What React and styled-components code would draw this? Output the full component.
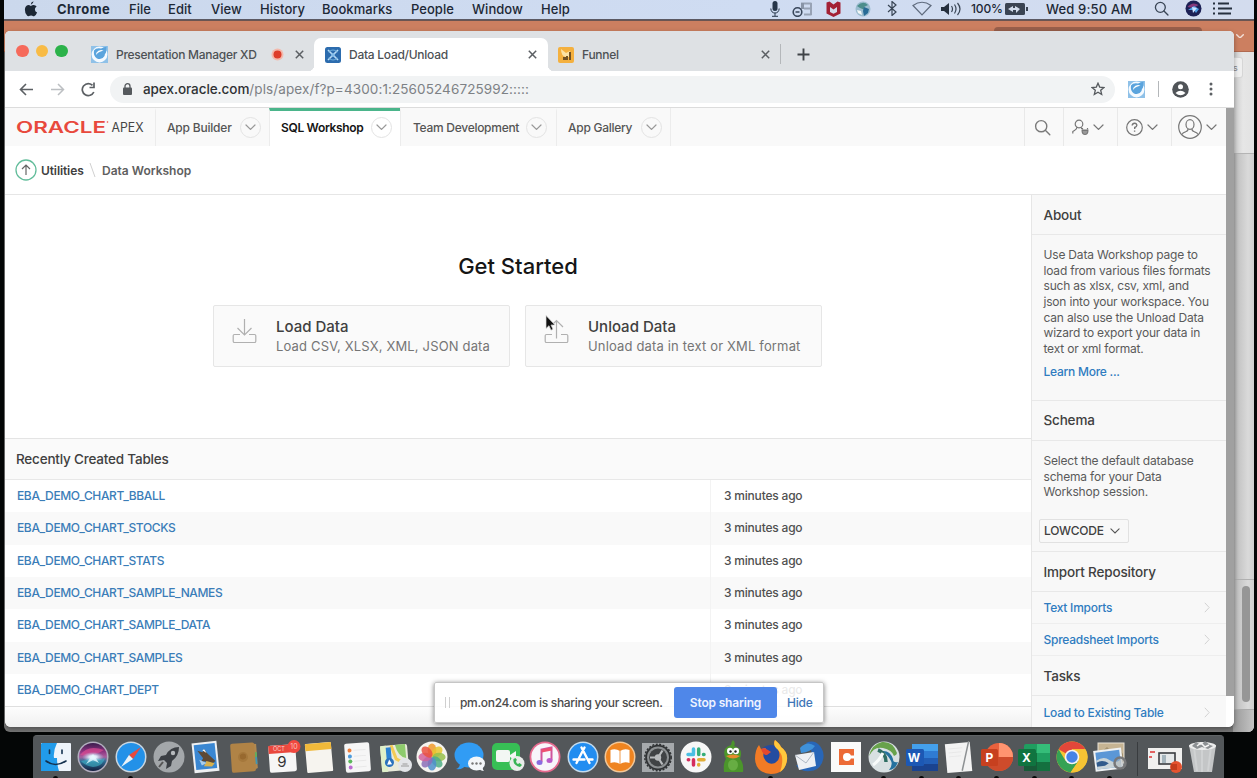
import React from "react";
import styled, { createGlobalStyle } from "styled-components";

const Global = createGlobalStyle`
  * { box-sizing: border-box; }
  body { margin: 0; background: #000; }
  #root { font-family: Inter, "Liberation Sans", sans-serif; }
  svg { display: block; flex: none; }
`;

/* ---------- desktop ---------- */
const Desktop = styled.div`
  position: relative; width: 1257px; height: 778px; overflow: hidden; background: #040606;
`;
const MenuBar = styled.header`
  display: flex; align-items: center; height: 20px; margin: 0 3px 0 4px; padding: 0 0 2px 20px;
  background: linear-gradient(90deg, #cbd8ec, #cfdcf2 60%, #d3dcee); color: #1d2836; font-size: 13px; font-weight: 500;
  border-bottom: 1px solid #5b5963;
`;
const MenuItem = styled.span`
  flex: none; width: ${p => p.$w}px; white-space: nowrap; font-weight: ${p => (p.$bold ? 700 : 500)};
  letter-spacing: ${p => p.$ls || 0}px; font-size: ${p => p.$size || 13}px; padding-left: ${p => p.$pl || 0}px;
`;
const MenuIcon = styled.span`
  flex: none; display: flex; justify-content: center; width: ${p => p.$w}px;
`;
const BackWindow = styled.div`
  position: absolute; left: 4px; top: 20px; width: 1250px; height: 712px; border-radius: 0 0 6px 6px;
  overflow: hidden; display: flex; flex-direction: column; background: #777;
`;
const BackTitle = styled.div`
  height: 32px; flex: none; background: #cc7f60; border-top: 1px solid #6b5552; border-bottom: 1px solid #b06a50; display: flex;
  justify-content: flex-end; padding-right: 10px; align-items: center;
`;
const BackTitleField = styled.div`
  align-self: flex-start; width: 208px; height: 14px; margin: 6px 34px 0 0; border-radius: 4px; background: #985f4b;
`;
const BackBody = styled.div`
  flex: 1; margin-left: 1229px; background: linear-gradient(90deg, #aaa 0, #c4c4c4 5px, #dadada 15px, #cfcfcf);
  display: flex; flex-direction: column; align-items: flex-end;
`;
const BackRibbon = styled.div`
  width: 21px; height: 102px; flex: none; border-bottom: 1px solid #b4b4b4; padding-top: 5px;
  background: linear-gradient(90deg, #c9c9c9, #e6e6e6 10px, #e2e2e2);
`;
const BackButton = styled.div`
  width: 10px; height: 21px; border: 1px solid #d6d6d6; border-left: 0; border-radius: 0 3px 3px 0; background: #efefef;
  font-size: 9px; line-height: 19px; color: #888;
`;
const BackPane = styled.div`
  width: 21px; height: 426px; flex: none; border-bottom: 1px solid #b0b0b0;
`;
const BackScroll = styled.div`
  width: 8px; height: 116px; margin: 6px 4px 0 0; border-radius: 4px; background: #969696; flex: none;
`;
const BackStatus = styled.div`
  width: 21px; flex: 1; margin-top: 7px; border-top: 1px solid #aaa; background: linear-gradient(90deg, #999, #c4c4c4);
`;

/* ---------- browser window ---------- */
const Browser = styled.div`
  position: absolute; left: 5px; top: 31px; width: 1229px; height: 696px; border-radius: 5px 5px 6px 6px; overflow: hidden;
  background: #fff; display: flex; flex-direction: column; box-shadow: 0 2px 5px rgba(0,0,0,.35);
`;
const TabStrip = styled.div`
  height: 40px; flex: none; background: #dee1e4; display: flex; align-items: flex-end; padding-left: 11px;
`;
const Lights = styled.div`
  display: flex; gap: 7px; width: 75px; height: 40px; align-items: center; flex: none;
`;
const Light = styled.i`
  width: 12.6px; height: 12.6px; border-radius: 50%; background: ${p => p.$c};
`;
const Tab = styled.div`
  position: relative; height: 33px; width: ${p => p.$w}px; flex: none; display: flex; align-items: center; padding-left: ${p => p.$pl || 0}px;
  border-radius: 7px 7px 0 0; background: ${p => (p.$on ? "#fff" : "transparent")}; color: #4d5155; font-size: 12px; font-weight: 500;
  &::before, &::after { content: ""; display: ${p => (p.$on ? "block" : "none")}; position: absolute; bottom: 0; width: 6px; height: 6px; }
  &::before { left: -6px; background: radial-gradient(circle at 0 0, transparent 6px, #fff 6.5px); }
  &::after { right: -6px; background: radial-gradient(circle at 100% 0, transparent 6px, #fff 6.5px); }
`;
const TabTitle = styled.span`
  margin-left: 8px; width: ${p => p.$w}px; white-space: nowrap; letter-spacing: -.27px;
`;
const Recording = styled.span`
  margin-right: 11px;
`;
const Divider = styled.i`
  width: 1px; height: ${p => p.$h}px; background: #b4b7ba; flex: none; margin: ${p => p.$m || 0};
`;
const Toolbar = styled.div`
  height: 36px; flex: none; display: flex; align-items: center; padding-left: 14px; background: #fff;
`;
const NavIcons = styled.div`
  display: flex; width: 91px; gap: 16px; align-items: center;
`;
const Address = styled.div`
  height: 27px; width: 1005px; border-radius: 14px; background: #f1f3f4; display: flex; align-items: center; padding: 0 10px 0 13px;
  font-size: 13.5px; color: #7d8185; white-space: nowrap;
`;
const Url = styled.span`
  flex: 1; margin-left: 11px; letter-spacing: .1px;
  b { color: #2f3235; font-weight: 500; letter-spacing: -.07px; }
`;
const Viewport = styled.div`
  flex: 1; display: flex; min-height: 0; border-top: 1px solid #dcdcdc;
`;
const Scroll = styled.div`
  width: 8px; background: #fff; &::before { content: ""; display: block; height: 588px; background: #a0a0a0; }
`;
const Page = styled.div`
  width: 1221px; display: flex; flex-direction: column; min-height: 0;
`;

/* ---------- APEX ---------- */
const NavBar = styled.nav`
  height: 38px; flex: none; background: #f9f9f9; display: flex;
`;
const Brand = styled.div`
  width: 150px; padding: 0 0 0 11px; display: flex; align-items: center;
`;
const NavTab = styled.div`
  width: ${p => p.$w}px; padding-left: ${p => p.$pl || 11}px; border-left: 1px solid #ececec; display: flex; align-items: center;
  border-top: 3px solid ${p => (p.$on ? "#4bb58b" : "transparent")}; padding-bottom: 3px;
  background: ${p => (p.$on ? "#fff" : "transparent")}; color: ${p => (p.$on ? "#151515" : "#555")}; font-size: 12px; font-weight: ${p => (p.$on ? 600 : 500)};
  span { width: ${p => p.$tw}px; white-space: nowrap; letter-spacing: ${p => p.$ls || 0}px; }
`;
const Drop = styled.i`
  width: 21px; height: 21px; border: 1px solid #e3e3e3; border-radius: 50%; display: flex; align-items: center; justify-content: center;
`;
const NavFill = styled.div`
  flex: 1; border-left: 1px solid #ececec;
`;
const NavTool = styled.div`
  width: ${p => p.$w}px; border-left: 1px solid #e9e9e9; display: flex; align-items: center; justify-content: center; gap: 4px; padding-right: ${p => p.$pr || 2}px;
`;
const Crumbs = styled.div`
  height: 49px; flex: none; border-bottom: 1px solid #e6e6e6; display: flex; align-items: center; padding-left: 10px; font-size: 12px; font-weight: 600; color: #555;
`;
const Crumb = styled.span`
  color: ${p => p.$c}; width: ${p => p.$w}px; margin-left: ${p => p.$ml}px; white-space: nowrap; letter-spacing: ${p => p.$ls || 0}px;
`;
const Body = styled.div`
  flex: 1; display: flex; min-height: 0; overflow: hidden;
`;
const Main = styled.main`
  width: 1026px; display: flex; flex-direction: column;
`;
const Hero = styled.section`
  height: 244px; flex: none; display: flex; flex-direction: column; align-items: center; padding-top: 56px; border-bottom: 1px solid #e4e4e4;
`;
const HeroTitle = styled.h1`
  margin: 0; font-size: 22px; line-height: 30px; font-weight: 500; color: #151515;
`;
const Cards = styled.div`
  display: flex; gap: 15px; margin: 24px 1px 0 0;
`;
const Card = styled.div`
  width: 297px; height: 62px; border: 1px solid #e6e6e6; border-radius: 2px; background: #fafafa; display: flex; align-items: center; padding: 0 0 0 18px;
`;
const CardIcon = styled.span`
  height: 36px;
`;
const CardText = styled.div`
  margin-left: 19px; display: flex; flex-direction: column; white-space: nowrap;
`;
const CardTitle = styled.span`
  font-size: 15px; line-height: 20px; font-weight: 500; color: #404040;
`;
const CardSub = styled.span`
  font-size: 13px; line-height: 18px; color: #757575; letter-spacing: .16px;
`;
const TableTitle = styled.h2`
  margin: 0; height: 41px; flex: none; padding-left: 11px; line-height: 40px; background: #fafafa; border-bottom: 1px solid #e8e8e8; font-size: 13.5px; font-weight: 500; color: #404040; letter-spacing: -.2px;
`;
const Row = styled.div`
  height: 32.35px; flex: none; display: flex; background: ${p => (p.$alt ? "#f9f9f9" : "#fff")}; line-height: 32px; font-size: 12px;
`;
const Name = styled.a`
  width: 706px; padding-left: 12px; color: #3b7db8; border-right: 1px solid #f3f3f3; font-weight: 500; letter-spacing: -.37px;
`;
const When = styled.span`
  padding-left: 13px; color: #505050; font-weight: 500; letter-spacing: -.2px;
`;
const TableFoot = styled.div`
  flex: 1; border-top: 1px solid #dfdfdf; background: linear-gradient(#fdfdfd, #f0f0f0);
`;
const Side = styled.aside`
  width: 195px; border-left: 1px solid #e6e6e6; background: #f8f8f8; display: flex; flex-direction: column; color: #5a5a5a;
`;
const SideTitle = styled.h3`
  margin: 0; flex: none; height: 40px; line-height: ${p => p.$lh || 39}px; padding-left: 11.5px; font-size: 13.5px; font-weight: 500; color: #404040;
  border-bottom: 1px solid #e8e8e8; letter-spacing: -.17px;
`;
const SideBody = styled.div`
  flex: none; height: ${p => p.$h}px; padding: 12px 0 0 11.5px; border-bottom: 1px solid #e8e8e8; display: flex; flex-direction: column; align-items: flex-start;
`;
const Line = styled.span`
  font-size: 12px; line-height: 15.7px; height: 15.7px; white-space: nowrap; letter-spacing: -.19px;
`;
const More = styled.a`
  margin-top: 7px; font-size: 12px; line-height: 16px; font-weight: 500; color: #2f7cc0; letter-spacing: -.25px;
`;
const Select = styled.div`
  margin: 19px 0 0 -4.5px; width: 90px; height: 24px; border: 1px solid #e1e1e1; border-radius: 2px; padding: 0 0 1px 4px; display: flex; align-items: center; gap: 6px;
  font-size: 12px; font-weight: 500; color: #404040; letter-spacing: -.25px;
`;
const SideLink = styled.a`
  flex: none; height: ${p => p.$h || 32}px; padding: 0 16px 0 11.5px; display: flex; align-items: center; justify-content: space-between; font-size: 12px; font-weight: 500; color: #2f7cc0;
  border-bottom: 1px solid #eee; letter-spacing: -.25px; white-space: nowrap;
`;

/* ---------- overlays ---------- */
const Pointer = styled.div`
  position: absolute; left: 545px; top: 315px;
`;
const ShareBar = styled.div`
  position: absolute; left: 434px; top: 682px; width: 390px; height: 41px; background: rgba(255,255,255,.88); border: 1px solid #c6c6c6; border-radius: 2px;
  box-shadow: 0 1px 5px rgba(0,0,0,.5); display: flex; align-items: center; padding-left: 10px; font-size: 12px; font-weight: 500; color: #4b4b4b;
`;
const Grip = styled.i`
  width: 5px; height: 11px; border: solid #cfcfcf; border-width: 0 1px;
`;
const ShareText = styled.span`
  margin-left: 10px; width: 214px; white-space: nowrap; letter-spacing: -.3px;
`;
const Stop = styled.button`
  width: 103px; height: 31px; padding: 0; border: 0; border-radius: 3px; background: rgba(72,130,232,.96); color: #eef3ff; font: 600 12px Inter, sans-serif; letter-spacing: -.17px;
`;
const Hide = styled.a`
  margin-left: 10px; color: #3f76b8; letter-spacing: -.2px;
`;
const Dock = styled.footer`
  position: absolute; left: 33px; top: 735px; width: 1191px; height: 43px; border-radius: 4px 4px 0 0; background: #53575a; display: flex; padding-left: 4px;
  border-top: 1px solid #5f6365;
`;
const DockItem = styled.div`
  position: relative; flex: none; width: 37.65px; padding-top: 5px; display: flex; justify-content: center; align-items: flex-start;
  &::after { content: ""; display: ${p => (p.$run ? "block" : "none")}; position: absolute; bottom: -1px; left: 16px; width: 5px; height: 3px; border-radius: 3px 3px 0 0; background: #050505; }
`;
const DockRule = styled.i`
  width: 1px; height: 34px; margin: 6px 8px 0 8px; background: #393c3f;
`;

const Chev = ({ c = "#777", w = 11, s = 1.2 }) => (
  <svg width={w} height={w * 0.6} viewBox="0 0 11 6.6" fill="none" stroke={c} strokeWidth={s} strokeLinecap="round"><path d="M1 1l4.5 4.4L10 1" /></svg>
);
const RightChev = () => (
  <svg width="6" height="11" viewBox="0 0 6 11" fill="none" stroke="#d2d2d2"><path d="M.8.8l4.4 4.7L.8 10.2" /></svg>
);
const Close = () => (
  <svg width="9" height="9" viewBox="0 0 9 9" stroke="#5b5f63" strokeWidth="1.500"><path d="M.8.8l7.4 7.4M8.2.8L.8 8.2" /></svg>
);
const PmIcon = () => (
  <svg width="17" height="17" viewBox="0 0 17 17"><rect width="17" height="17" fill="#8fc1e8" /><circle cx="8.500" cy="8.500" r="7.900" fill="#f5faff" /><path d="M3 4.500Q5 1.500 10 2.500L15.500 .5 15 6.500Q13.500 8 13.500 10 11 14.500 6 12.500 2 10 3 4.500z" fill="#5ba4dd" /><path d="M5.200 7Q8 2.800 12.500 4.500L9 5.800Q6 6.500 5.500 9z" fill="#fff" /></svg>
);
const Search = ({ size = 17, c = "#7a7a7a", s = 1.4 }) => (
  <svg width={size} height={size} viewBox="0 0 17 17" fill="none" stroke={c} strokeWidth={s} strokeLinecap="round"><circle cx="7.200" cy="7.200" r="5.600" /><path d="M11.300 11.300l4.500 4.500" /></svg>
);

/* ---------- dock drawings ---------- */
const art = {
  finder: <><rect x="1" y="2" width="30" height="28" rx="1" fill="#eef4fb" /><path d="M2 2h15q-4 8-3 15h3q0 7 2 13H1V3z" fill="#219bea" /><path d="M9.500 9v3.500M22 9v3.500M6 20q9 7 20 0" fill="none" stroke="#143250" strokeWidth="1.600" strokeLinecap="round" /></>,
  siri: <>
    <defs><radialGradient id="siriGlow"><stop offset="0" stopColor="#fff" /><stop offset=".35" stopColor="#e6f6ff" stopOpacity=".9" /><stop offset="1" stopColor="#9fd4f0" stopOpacity="0" /></radialGradient>
      <linearGradient id="siriBall" x1="0" y1="0" x2="0" y2="1"><stop offset="0" stopColor="#3a1c4c" /><stop offset=".3" stopColor="#8d3380" /><stop offset=".5" stopColor="#a9609f" /><stop offset=".65" stopColor="#2f6f96" /><stop offset="1" stopColor="#141d3d" /></linearGradient></defs>
    <circle cx="16" cy="16" r="15.500" fill="#b3aebf" /><circle cx="16" cy="16" r="14" fill="url(#siriBall)" /><path d="M3 14Q11 3 27 9q-6 4-12 5-6 1-12 0z" fill="#dd4b93" opacity=".7" /><path d="M4 20q8-1 11-6 5 6 13 3-2 8-12 9-8-1-12-6z" fill="#3fb3c8" opacity=".6" /><ellipse cx="16" cy="16" rx="11" ry="5" fill="url(#siriGlow)" /><path d="M16 13l6 9-6-3-7 4z" fill="#e3f8ff" opacity=".8" />
  </>,
  safari: <><circle cx="16" cy="16" r="15.500" fill="#c9d7e2" /><circle cx="16" cy="16" r="14" fill="#2391e8" /><path d="M26 6L14 14l4 4z" fill="#e9493d" /><path d="M6 26l8-12 4 4z" fill="#eaf2f8" /></>,
  launch: <><circle cx="16" cy="16" r="15.500" fill="#a3a7aa" /><path d="M26 6q-9 0-13 8l-5 1-3 5 6-1 3 3-1 6 5-3 1-5q7-5 7-14z" fill="#3b3f44" /><circle cx="20" cy="12" r="2.200" fill="#b6babd" /><path d="M10 21l-4 5" stroke="#555" strokeWidth="2" /></>,
  mail: <g transform="rotate(-6 16 16)"><rect x="3" y="1" width="25" height="30" fill="#eef0f2" /><rect x="5" y="3" width="21" height="25" fill="#3a87d2" /><path d="M8 9l5 2 2-3 3 5 7 8-3 2-8-3-4 1 3-4z" fill="#5d4936" /><path d="M13 9l2-1 2 4z" fill="#fff" /><path d="M16 20l8 3-3 3-8-1z" fill="#d7b14e" /><path d="M9 18l7 4-5 2z" fill="#a9cdea" /></g>,
  contacts: <g transform="rotate(-4 16 16)"><path d="M24 3l5 1v24l-5 2z" fill="#b08850" /><path d="M27 12h2v5h-2z" fill="#5fae5e" /><path d="M27 17h2v7h-2z" fill="#3f96b5" /><rect x="3" y="2" width="24" height="29" rx="2" fill="#b08346" /><circle cx="15" cy="16" r="5" fill="#a5783c" /><path d="M12 14q3-3 6 0v3q-3 3-6 0z" fill="#98692f" /></g>,
  calendar: <><g transform="rotate(-4 16 16)"><rect x="3" y="4" width="27" height="27" rx="2" fill="#f6f6f6" /><path d="M3 4h27v8H3z" fill="#e9483e" /></g><text x="16" y="26" textAnchor="middle" fontSize="15" fill="#333" fontFamily="Inter">9</text><text x="13" y="10" textAnchor="middle" fontSize="5.500" fill="#fbd0cc" fontFamily="Inter">OCT</text><circle cx="28" cy="5.500" r="6.500" fill="#f1483f" /><text x="28" y="8" textAnchor="middle" fontSize="7" fill="#fbc0bb" fontFamily="Inter">10</text></>,
  notes: <g transform="rotate(-5 16 16)"><rect x="3" y="2" width="26" height="29" rx="1" fill="#f6f4ef" /><path d="M3 2h26v7H3z" fill="#f0b93a" /></g>,
  reminders: <g transform="rotate(-4 16 16)"><rect x="4" y="2" width="25" height="29" rx="2" fill="#f6f6f6" /><circle cx="9" cy="9" r="2" fill="#ee7e3b" /><circle cx="9" cy="15" r="2" fill="#4d9bdc" /><circle cx="9" cy="20" r="2" fill="#5bb85c" /><circle cx="9" cy="26" r="2" fill="#bb6bd1" /><path d="M13 9h12M13 15h12M13 20h12M13 26h12" stroke="#e8e8e8" /></g>,
  maps: <><g transform="rotate(-5 16 16)"><rect x="2" y="4" width="27" height="26" rx="2" fill="#e9eadb" /><path d="M2 4h6v26H2z" fill="#dff0c9" /><path d="M17 4h10v14q-8-2-10-14z" fill="#8ecb6c" /><path d="M13 4l4 14 12 8" stroke="#f4cb55" strokeWidth="3" fill="none" /><path d="M10 6v14" stroke="#2b82d4" strokeWidth="5" /><circle cx="10" cy="21" r="4.500" fill="#2b72bd" /><path d="M10 18l2.500 5h-5z" fill="#fff" /></g><circle cx="26" cy="24" r="7" fill="#e3e5e8" /><path d="M22 25h8M23.500 23h5" stroke="#999" /></>,
  photos: <><circle cx="16" cy="16" r="15.500" fill="#f5f3ef" />{["#f19a2b", "#e8c62f", "#97c04b", "#4fae86", "#4e8fcb", "#8b6fb9", "#d2629a", "#ea5140"].map((c, i) => <ellipse key={c} cx="16" cy="9" rx="4.300" ry="6.600" fill={c} opacity=".85" transform={`rotate(${i * 45} 16 16)`} />)}</>,
  messages: <><ellipse cx="15" cy="14" rx="14.500" ry="12.500" fill="#319cf4" /><path d="M6 22q0 5-4 6 7 1 10-4z" fill="#319cf4" /><ellipse cx="22.500" cy="22.500" rx="8.500" ry="7" fill="#f3f6f9" /><path d="M25 27q1 3 5 3-2-2-1-6z" fill="#f3f6f9" /><circle cx="18.500" cy="22.500" r="1.200" fill="#777" /><circle cx="22.500" cy="22.500" r="1.200" fill="#777" /><circle cx="26.500" cy="22.500" r="1.200" fill="#777" /></>,
  facetime: <><rect x="0" y="2" width="28" height="27" rx="5" fill="#37bf55" /><rect x="4" y="9" width="14" height="12" rx="2" fill="#f2f7f3" /><path d="M18 14l6-4v10l-6-4z" fill="#f2f7f3" /><circle cx="25" cy="22.500" r="7.500" fill="#e9edea" /><path d="M21.500 18q-1 6 6.500 8l2-2-2.500-2-1.500 1q-2-1-2-3l1-1-1.500-2z" fill="#38b455" /></>,
  itunes: <><circle cx="16" cy="16" r="15.500" fill="#e66a8f" /><circle cx="16" cy="16" r="13.700" fill="#f8f5fa" /><path d="M12.500 21V8.500l10-2V19" stroke="#d0539b" strokeWidth="2" fill="none" /><path d="M12.500 10l10-2" stroke="#ee4f70" strokeWidth="3" /><ellipse cx="10.500" cy="21.500" rx="3" ry="2.500" fill="#8b6be0" /><ellipse cx="20.500" cy="19.500" rx="3" ry="2.500" fill="#bb5bc9" /></>,
  store: <><circle cx="16" cy="16" r="15.500" fill="#c5dcee" /><circle cx="16" cy="16" r="14" fill="#228df0" /><path d="M17.500 6.500L9.500 22M14.500 6.500L22.500 22M6.500 18.500h11M21 18.500h4.500" stroke="#fff" strokeWidth="2.400" strokeLinecap="round" /></>,
  books: <><circle cx="16" cy="16" r="15.500" fill="#f2c798" /><circle cx="16" cy="16" r="14" fill="#ef8420" /><path d="M6.500 9q5-2 9.500 1 4.500-3 9.500-1v13q-5-2-9.500 1-4.500-3-9.500-1z" fill="#fff" /><path d="M16 10v13" stroke="#ef9a4a" /></>,
  prefs: <><rect x="0" y="2" width="32" height="29" fill="#a5a9ac" /><circle cx="16" cy="16.500" r="12.800" fill="#303335" /><circle cx="16" cy="16.500" r="11" fill="#8c9092" /><circle cx="16" cy="16.500" r="9" fill="#404345" /><path d="M16 16.500H8M16 16.500l4.500-7M16 16.500l4.500 7" stroke="#b8bbbd" strokeWidth="2.200" /><circle cx="16" cy="16.500" r="3.200" fill="#b8bbbd" /><circle cx="16" cy="16.500" r="13.200" fill="none" stroke="#303335" strokeWidth="1.500" strokeDasharray="2 1.500" /></>,
  slack: <><circle cx="16" cy="16" r="15.500" fill="#f7f7f7" /><g strokeWidth="3.500" strokeLinecap="round"><path d="M13.500 8v4.500M8 13.500h5.500" stroke="#4abfe4" /><path d="M18.700 8v5.500M24 13.500h-.5" stroke="#35ae78" /><path d="M18.700 18.700H24M18.700 23.500v.5" stroke="#e2ae36" /><path d="M13.500 18.700V24M8.300 18.700h.4" stroke="#d52d5d" /></g></>,
  adium: <><path d="M16-1q3 3 1 6 8 2 7 9l-1 4q4 4 3 13H7Q6 22 9 18q-3-5-1-10 2-3 6-4 0-3 2-5z" fill="#4b952b" /><ellipse cx="13" cy="10" rx="3" ry="3.200" fill="#fff" /><ellipse cx="19" cy="10" rx="3" ry="3.200" fill="#fff" /><circle cx="13.500" cy="10.500" r="1.200" fill="#222" /><circle cx="18.500" cy="10.500" r="1.200" fill="#222" /><path d="M9 15q7-3 14 0-7 5-14 0z" fill="#e58b2c" /><ellipse cx="16" cy="24" rx="5" ry="5.500" fill="#67ad43" /></>,
  firefox: <><circle cx="16" cy="17" r="13" fill="#244ca0" /><path d="M20-1q5 4 6 7 7 5 6 13-2 14-16 14Q1 32 0 18 0 9 4 4l2 4 5-1q-4 5-2 10 4 8 11 5 6-4 4-11-1-4-4-6-2-3 0-6z" fill="#f27b25" /><path d="M20-1q5 4 6 7 7 5 6 13-1 8-7 12 3-8 2-15-1-5-6-9-3-3-1-8z" fill="#ffc83d" /><path d="M6 8q3-2 7 1l3 2-4 3q-4 0-6-6z" fill="#e6492d" /></>,
  thunder: <><path d="M13 2q8-4 14 3 6 8 2 17-4 8-12 8-10 1-14-6 18 3 16-11-1-7-6-11z" fill="#2866b7" /><path d="M7 7Q14-1 22 5q-4 6-14 7z" fill="#3f91d9" /><path d="M2 14l19-3 2 14-17 4z" fill="#eef1f4" /><path d="M2 14l11 8 8-11" stroke="#afb9c4" fill="none" /></>,
  camtasia: <><rect x="1" y="1" width="30" height="30" fill="#fafafa" /><rect x="9" y="8" width="15" height="16" fill="#ec6a36" /><circle cx="17" cy="16" r="4" fill="#fff" /><path d="M17 14.500h7v3h-7z" fill="#fff" /></>,
  webex: <><circle cx="16" cy="16" r="15.500" fill="#d8e0e2" /><path d="M1 15Q6 5 15 7q9 2 11 8 3-1 3-3Q25 0 14 1 4 3 1 15z" fill="#68a24b" /><path d="M14 10q8-1 11 8 0 4 5 3-3 8-9 8 4-5 2-9-3-6-9-10z" fill="#25719e" /><path d="M10 9q8 3 8 12" stroke="#2e6d62" strokeWidth="3.500" fill="none" /><path d="M5 24q6-4 10-12" stroke="#f7fafa" strokeWidth="3" fill="none" /></>,
  word: <><rect x="6" y="3" width="26" height="27" rx="2" fill="#2f7bd3" /><path d="M6 3h26v7H6z" fill="#44a0ec" /><path d="M6 17h26v6H6z" fill="#225eb6" /><path d="M6 23h26v7H6z" fill="#1a438f" /><rect x="0" y="8" width="18" height="17" rx="1.500" fill="#1c58b4" /><text x="8" y="21" textAnchor="middle" fontFamily="Inter" fontWeight="700" fontSize="12" fill="#fff">W</text></>,
  text: <g transform="rotate(-5 16 16)"><rect x="3" y="2" width="25" height="29" fill="#f3f3f3" /><path d="M27 1l-9 29" stroke="#8d9193" strokeWidth="1.500" /><path d="M6 7h14M6 11h13M6 15h12" stroke="#e8e8e8" /></g>,
  ppt: <><circle cx="18" cy="16" r="14" fill="#e9613d" /><path d="M18 2a14 14 0 0114 14H18z" fill="#ff9470" /><path d="M4 16h28a14 14 0 01-28 0z" fill="#ce4b2b" /><rect x="0" y="8" width="17" height="17" rx="1.500" fill="#c7401f" /><text x="8.500" y="21" textAnchor="middle" fontFamily="Inter" fontWeight="700" fontSize="12" fill="#fff">P</text></>,
  excel: <><rect x="6" y="3" width="26" height="27" rx="2" fill="#1f9e60" /><path d="M19 3h13v9H19z" fill="#35bd79" /><path d="M6 12h13v9H6zM19 21h13v9H19z" fill="#14703f" /><path d="M6 21h13v9H6z" fill="#185b38" /><rect x="0" y="8" width="18" height="17" rx="1.500" fill="#107440" /><text x="8.500" y="21" textAnchor="middle" fontFamily="Inter" fontWeight="700" fontSize="12" fill="#fff">X</text></>,
  chrome: <><circle cx="16" cy="16" r="15.500" fill="#f6c434" /><path d="M16 16L2.600 8.200A15.500 15.500 0 0129.400 8.200H16z" fill="#e2473a" /><path d="M16 16l-6.500 3.800L2.600 8.200a15.500 15.500 0 0012 23.200L22.500 20z" fill="#35a254" /><path d="M29.400 8.200H16l6.500 11.800-7.900 11.400A15.500 15.500 0 0029.400 8.200z" fill="#f6c434" /><circle cx="16" cy="16" r="7.300" fill="#f4f4f4" /><circle cx="16" cy="16" r="5.700" fill="#4683e6" /></>,
  preview: <><rect x="4" y="2" width="26" height="20" fill="#c6b493" stroke="#e8e2d6" /><path d="M5 13l8-7 7 7 6-4 3 4v8H5z" fill="#a2916f" /><g transform="rotate(-7 16 16)"><rect x="0" y="8" width="28" height="21" fill="#eef1f3" /><path d="M2 10h24v17H2z" fill="#5b97d6" /><path d="M2 18q8-4 13 1t11 1v7H2z" fill="#c9d4d8" /><path d="M2 20q6-3 12 2l-4 2H2z" fill="#315b8c" /></g><circle cx="26" cy="22" r="5.500" fill="#aeb4b680" stroke="#77787a" strokeWidth="2.500" /></>,
  shot: <><rect x="0" y="7" width="34" height="21" fill="#f0f0ef" /><rect x="11" y="12" width="16" height="11" fill="#e5e8e9" stroke="#3a3c40" strokeWidth="1.600" /><path d="M14 14h4v8h-4z" fill="#a5b5bd" /><path d="M2 11h5M1 16h3" stroke="#d33" strokeWidth="1.500" /><circle cx="28" cy="26" r="6" fill="#e5532f" /><path d="M23 23h6v6h-6z" fill="#c43d1d" /></>,
  trash: <><path d="M3 4h27l-4 27H8z" fill="#c4c6c7" /><path d="M8 6l3 24M16 6v25M25 6l-3 24" stroke="#d0d2d3" strokeWidth="2" /><ellipse cx="16.500" cy="5" rx="13.500" ry="4" fill="#eceded" /><path d="M6 5l4-4 5 3 4-4 5 4 3 1-5 3-6-2-5 2z" fill="#8c9093" /><path d="M11 5l4-3 4 4 4-2" stroke="#f4f4f4" strokeWidth="1.500" fill="none" /></>
};
const dockItems = ["finder*", "siri", "safari*", "launch", "mail", "contacts", "calendar", "notes", "reminders", "maps", "photos", "messages", "facetime", "itunes", "store", "books", "prefs", "slack", "adium", "firefox*", "thunder", "camtasia", "webex*", "word*", "text*", "ppt*", "excel*", "chrome*", "preview*"];
const DockIcon = ({ id }) => (
  <DockItem $run={id.endsWith("*")}><svg width="32" height="32" viewBox="0 0 32 32" overflow="visible">{art[id.replace("*", "")]}</svg></DockItem>
);

const tables = ["BBALL", "STOCKS", "STATS", "SAMPLE_NAMES", "SAMPLE_DATA", "SAMPLES", "DEPT"];
const menus = [["File", 39], ["Edit", 43], ["View", 49], ["History", 62], ["Bookmarks", 89], ["People", 61], ["Window", 69], ["Help", 222]];

function SystemMenu() {
  return (
    <MenuBar>
      <MenuItem $w={33}>
        <svg width="14" height="16" viewBox="0 0 14 16" fill="#1d2836"><path d="M9.500.3Q9.500 3 6.800 3.700 6.700 1.200 9.500.3zM6.900 4.900Q8 4 9.600 4q2 .1 3 1.600-2 1.200-1.700 3.200.2 2 2.200 2.800-1.400 3.600-3 3.700-1 0-1.800-.5-1.200-.5-2.400 0-1.600.9-2.700 0Q.7 12 .9 8.500 1.100 4.700 4.300 4.100q1.300 0 2.600.8z" /></svg>
      </MenuItem>
      <MenuItem $w={72} $bold $ls={0.5}>Chrome</MenuItem>
      {menus.map(([t, w]) => <MenuItem key={t} $w={w} $ls={0.04}>{t}</MenuItem>)}
      <MenuIcon $w={24}><svg width="10" height="16" viewBox="0 0 10 16"><rect x="2.500" y="0" width="5" height="10" rx="2.500" fill="#26364a" /><path d="M.8 7.500q.4 4.500 4.200 4.500t4.200-4.500M5 12v3M2 15.300h6" stroke="#26364a" fill="none" /></svg></MenuIcon>
      <MenuIcon $w={31}><svg width="21" height="16" viewBox="0 0 21 16" fill="none"><path d="M9 2.500h10.500M12 7.500h7.500M12 13.500h7.500M19 2v12" stroke="#98a3b5" strokeWidth="2" /><path d="M9 2h3v6H9z" fill="#8995a7" /><circle cx="5.500" cy="11" r="4.300" stroke="#39475b" strokeWidth="1.600" /><path d="M3.500 11h4" stroke="#39475b" strokeWidth="1.500" /></svg></MenuIcon>
      <MenuIcon $w={31}><svg width="15" height="16" viewBox="0 0 15 16"><path d="M.5 1.500l3-1 4 3 4-3 3 1v11l-7 3.500-7-3.500z" fill="#a32135" /><path d="M4 6v5l3.500 1.800L11 11V6L7.500 8.500z" fill="#d3daea" /></svg></MenuIcon>
      <MenuIcon $w={28}><svg width="16" height="16" viewBox="0 0 16 16"><circle cx="8" cy="8" r="7.500" fill="#9bbccf" /><path d="M2 5q6-6 11-1l-4 2 1 3-5-2z" fill="#4c8e8c" /><path d="M9 6l5 2-1 4-4 3-1-5z" fill="#286b96" /><path d="M2 9l4 1 1 4-4-2z" fill="#f2f6f5" /></svg></MenuIcon>
      <MenuIcon $w={30}><svg width="10" height="15" viewBox="0 0 10 15" fill="none" stroke="#394555" strokeWidth="1.200"><path d="M1 4l8 7-4 3.500V.5L9 4l-8 7" /></svg></MenuIcon>
      <MenuIcon $w={29}><svg width="20" height="15" viewBox="0 0 20 15" fill="none" stroke="#5f6b7d" strokeWidth="1.200"><path d="M1 4.500Q10-2 19 4.500L10 14z" /></svg></MenuIcon>
      <MenuIcon $w={31}><svg width="21" height="14" viewBox="0 0 21 14" fill="none" stroke="#394555" strokeWidth="1.200"><path d="M0 5h3l5-4v12L3 9H0z" fill="#26303e" stroke="none" /><path d="M10.500 4q2 3 0 6M13.500 2.500q3 4.500 0 9M16.500 1q5 6 0 12" /></svg></MenuIcon>
      <MenuItem $w={38} $size={12} $pl={4} $ls={-0.15}>100%</MenuItem>
      <MenuItem $w={41}><svg width="23" height="12" viewBox="0 0 23 12"><rect width="20" height="12" rx="1.500" fill="#3a4453" /><path d="M21 4h2v4h-2z" fill="#3a4453" /><path d="M3 6l5-3v2h2V3l5 3-4 4V7H8v2z" fill="#d2dcec" /></svg></MenuItem>
      <MenuItem $w={105} $ls={0.15}>Wed 9:50 AM</MenuItem>
      <MenuIcon $w={20}><Search size={15} c="#394555" s={1.500} /></MenuIcon>
      <MenuIcon $w={45}><svg width="17" height="17" viewBox="0 0 17 17"><circle cx="8.500" cy="8.500" r="8" fill="#1d2155" /><path d="M2.500 7q5-6 11-2l-5 3z" fill="#b2458a" opacity=".7" /><path d="M3 10l6-4 5 3-3 4-2-3z" fill="#4d9de3" /><path d="M7 7l5 1-4 5z" fill="#cce2ff" /></svg></MenuIcon>
      <MenuIcon $w={13}><svg width="19" height="13" viewBox="0 0 19 13" stroke="#26303e" strokeWidth="2"><path d="M0 1.500h2M0 6.500h2M0 11.500h2M5 1.500h11M5 6.500h14M5 11.500h13" /></svg></MenuIcon>
    </MenuBar>
  );
}

function BrowserChrome() {
  return (
    <>
      <TabStrip>
        <Lights><Light $c="#f66a5b" /><Light $c="#f8bb45" /><Light $c="#2bb24a" /></Lights>
        <Tab $w={223}>
          <PmIcon /><TabTitle $w={155}>Presentation Manager XD</TabTitle>
          <Recording><svg width="13" height="13" viewBox="0 0 13 13"><circle cx="6.500" cy="6.500" r="6" fill="#f3b9ac" /><circle cx="6.500" cy="6.500" r="4" fill="#dd3d2a" /></svg></Recording>
          <Close />
        </Tab>
        <Tab $w={234} $pl={11} $on>
          <svg width="16" height="16" viewBox="0 0 16 16"><rect width="16" height="16" rx="2.500" fill="#2c6cae" /><path d="M3 3l4 4M13 3L9 7M3 13l4-4M13 13L9 9" stroke="#b8dbf5" strokeWidth="1.600" /><circle cx="8" cy="8" r="2" fill="#85bde9" /><path d="M3 5q5-4 10 0M3 11q5 4 10 0" stroke="#6faedd" fill="none" /></svg>
          <TabTitle $w={179}>Data Load/Unload</TabTitle><Close />
        </Tab>
        <Tab $w={232} $pl={10}>
          <svg width="16" height="16" viewBox="0 0 16 16"><rect width="16" height="16" rx="2" fill="#f4b03e" /><path d="M3 2l5 4 4-2 1 6H8q-5-1-5-8z" fill="#fbe2a4" /><path d="M5 10h3v3H5zM8 9h2v4H8zM11 5h2v8h-2z" fill="#725223" /></svg>
          <TabTitle $w={179}>Funnel</TabTitle><Close />
        </Tab>
        <Divider $h={20} $m="0 16px 7px 0" />
        <svg width="13" height="33" viewBox="0 0 13 33" stroke="#3f4347" strokeWidth="1.900"><path d="M6.500 10.500v12M.5 16.500h12" /></svg>
      </TabStrip>
      <Toolbar>
        <NavIcons>
          <svg width="15" height="13" viewBox="0 0 15 13" fill="none" stroke="#5c6064" strokeWidth="1.600"><path d="M14 6.500H2M7 1L1.500 6.500 7 12" /></svg>
          <svg width="15" height="13" viewBox="0 0 15 13" fill="none" stroke="#bcbfc2" strokeWidth="1.500"><path d="M1 6.500h12M8 1l5.500 5.500L8 12" /></svg>
          <svg width="15" height="15" viewBox="0 0 15 15" fill="none" stroke="#5c6064" strokeWidth="1.700"><path d="M12.800 10A6 6 0 112.500 4q4-4.500 9-.8M13 .5v5H8.500" /></svg>
        </NavIcons>
        <Address>
          <svg width="9" height="12" viewBox="0 0 9 12"><rect y="4.500" width="9" height="7.500" rx="1" fill="#55595d" /><path d="M2 5V3.200a2.500 2.500 0 015 0V5" fill="none" stroke="#55595d" strokeWidth="1.300" /></svg>
          <Url><b>apex.oracle.com</b>/pls/apex/f?p=4300:1:25605246725992:::::</Url>
          <svg width="14" height="14" viewBox="0 0 14 14" fill="none" stroke="#55595d" strokeWidth="1.300"><path d="M7 1.200l1.700 3.900 4.200.4-3.200 2.800 1 4.200L7 10.300l-3.700 2.200 1-4.200L1.100 5.500l4.200-.4z" /></svg>
        </Address>
        <Divider $h={0} $m="0 12px 0 0" /><PmIcon /><Divider $h={16} $m="0 13px 0 13px" />
        <svg width="17" height="17" viewBox="0 0 17 17"><circle cx="8.500" cy="8.500" r="8.300" fill="#505458" /><circle cx="8.500" cy="5.800" r="2.500" fill="#fff" /><path d="M3.500 12q5-4.300 10 0-5 4.500-10 0z" fill="#fff" /></svg>
        <Divider $h={0} $m="0 0 0 19px" />
        <svg width="4" height="14" viewBox="0 0 4 14" fill="#5c6064"><circle cx="2" cy="2" r="1.500" /><circle cx="2" cy="7" r="1.500" /><circle cx="2" cy="12" r="1.500" /></svg>
      </Toolbar>
    </>
  );
}

function ApexNav() {
  return (
    <NavBar>
      <Brand>
        <svg width="128" height="16" viewBox="0 0 128 16" overflow="visible"><text x="0" y="13.500" textLength="90" lengthAdjust="spacingAndGlyphs" fontFamily="Inter" fontSize="15.500" fontWeight="600" fill="#e8493d">ORACLE</text><circle cx="91.500" cy="3" r=".8" fill="#e8493d" /><text x="95.500" y="13" textLength="32" lengthAdjust="spacingAndGlyphs" fontFamily="Inter" fontSize="12.500" fill="#454545">APEX</text></svg>
      </Brand>
      <NavTab $w={114} $tw={73} $ls={-0.2}><span>App Builder</span><Drop><Chev c="#999" /></Drop></NavTab>
      <NavTab $w={131} $tw={90} $ls={-0.32} $on><span>SQL Workshop</span><Drop><Chev c="#999" /></Drop></NavTab>
      <NavTab $w={156} $pl={12} $tw={113} $ls={-0.28}><span>Team Development</span><Drop><Chev c="#999" /></Drop></NavTab>
      <NavTab $w={114} $tw={73} $ls={-0.27}><span>App Gallery</span><Drop><Chev c="#999" /></Drop></NavTab>
      <NavFill />
      <NavTool $w={39} $pr={4}><Search /></NavTool>
      <NavTool $w={54} $pr={6}>
        <svg width="17" height="17" viewBox="0 0 17 17" fill="none" stroke="#777" strokeWidth="1.200"><circle cx="7" cy="5" r="3.800" /><path d="M4.800 8.200q.3 2-2 3L.8 12.500v2M9.500 8.200V10M10.500 10.500v-1.500M15.500 10.500v-1.500" /><path d="M9.500 11h7M10.200 11.500h5.600v1.500q-.5 2.500-2.800 2.500t-2.800-2.500z" fill="#999" /></svg><Chev />
      </NavTool>
      <NavTool $w={54} $pr={5}>
        <svg width="17" height="17" viewBox="0 0 17 17" fill="none" stroke="#777" strokeWidth="1.200"><circle cx="8.500" cy="8.500" r="7.800" /><path d="M6.200 6.500q.3-2.300 2.500-2.200 2.300.2 2.100 2.200-.2 1.200-2.100 2v1.600M8.600 11.500v1.300" strokeWidth="1.400" /></svg><Chev />
      </NavTool>
      <NavTool $w={55} $pr={4}>
        <svg width="24" height="24" viewBox="0 0 24 24" fill="none" stroke="#777" strokeWidth="1.200"><circle cx="12" cy="12" r="11.300" /><ellipse cx="12" cy="9.500" rx="4" ry="4.800" /><path d="M10 13.800q.3 2-2.500 3-3 .8-3.300 2.500M14 13.800q-.3 2 2.500 3 3 .8 3.300 2.500" /></svg><Chev />
      </NavTool>
    </NavBar>
  );
}

const TrayIcon = ({ up }) => (
  <CardIcon><svg width="25" height="26" viewBox="0 0 25 26" fill="none" stroke="#b0b0b0" strokeWidth="1.200"><path d="M8 16.500H2.500q-1.300 0-1.300 1.300v5.400q0 1.300 1.300 1.300h20q1.300 0 1.300-1.300v-5.400q0-1.300-1.300-1.300H17" /><path d={up ? "M12.500 20.500V2.500M6 9l6.500-6.500L19 9" : "M12.500 1v15.500M5.500 10l7 7 7-7"} /></svg></CardIcon>
);

const about = ["Use Data Workshop page to", "load from various files formats", "such as xlsx, csv, xml, and", "json into your workspace. You", "can also use the Unload Data", "wizard to export your data in", "text or xml format."];

export default function App() {
  return (
    <>
      <Global />
      <Desktop>
        <SystemMenu />
        <BackWindow>
          <BackTitle><BackTitleField /><Chev c="#f3e0d8" w={8} s={2} /></BackTitle>
          <BackBody>
            <BackRibbon><BackButton>s</BackButton></BackRibbon>
            <BackPane /><BackScroll /><BackStatus />
          </BackBody>
        </BackWindow>
        <Browser>
          <BrowserChrome />
          <Viewport>
            <Page>
              <ApexNav />
              <Crumbs>
                <svg width="22" height="22" viewBox="0 0 22 22" fill="none"><circle cx="11" cy="11" r="10" stroke="#63bd9b" strokeWidth="1.300" /><path d="M11 16V6.500M7 10l4-4 4 4" stroke="#666" strokeWidth="1.200" /></svg>
                <Crumb $c="#404040" $w={48} $ml={4} $ls={-0.1}>Utilities</Crumb>
                <svg width="7" height="14" viewBox="0 0 7 14" stroke="#d0d0d0"><path d="M1 0l5 14" /></svg>
                <Crumb $c="#606060" $w={100} $ml={6}>Data Workshop</Crumb>
              </Crumbs>
              <Body>
                <Main>
                  <Hero>
                    <HeroTitle>Get Started</HeroTitle>
                    <Cards>
                      <Card><TrayIcon /><CardText><CardTitle>Load Data</CardTitle><CardSub>Load CSV, XLSX, XML, JSON data</CardSub></CardText></Card>
                      <Card><TrayIcon up /><CardText><CardTitle>Unload Data</CardTitle><CardSub>Unload data in text or XML format</CardSub></CardText></Card>
                    </Cards>
                  </Hero>
                  <TableTitle>Recently Created Tables</TableTitle>
                  {tables.map((t, i) => <Row key={t} $alt={i % 2 === 1}><Name>EBA_DEMO_CHART_{t}</Name><When>3 minutes ago</When></Row>)}
                  <TableFoot />
                </Main>
                <Side>
                  <SideTitle $lh={40}>About</SideTitle>
                  <SideBody $h={166}>{about.map(t => <Line key={t}>{t}</Line>)}<More>Learn More ...</More></SideBody>
                  <SideTitle>Schema</SideTitle>
                  <SideBody $h={111}>
                    <Line>Select the default database</Line><Line>schema for your Data</Line><Line>Workshop session.</Line>
                    <Select>LOWCODE <Chev c="#555" w={10} /></Select>
                  </SideBody>
                  <SideTitle $lh={40}>Import Repository</SideTitle>
                  <SideLink>Text Imports<RightChev /></SideLink>
                  <SideLink>Spreadsheet Imports<RightChev /></SideLink>
                  <SideTitle $lh={41}>Tasks</SideTitle>
                  <SideLink $h={33}>Load to Existing Table<RightChev /></SideLink>
                </Side>
              </Body>
            </Page>
            <Scroll />
          </Viewport>
        </Browser>
        <Pointer><svg width="13" height="17" viewBox="0 0 13 17"><path d="M1 .5v13l3-2.800 2 4.500 2-1-2-4.200H10z" fill="#111" stroke="#ddd" strokeWidth=".7" /></svg></Pointer>
        <ShareBar><Grip /><ShareText>pm.on24.com is sharing your screen.</ShareText><Stop>Stop sharing</Stop><Hide>Hide</Hide></ShareBar>
        <Dock>
          {dockItems.map(id => <DockIcon key={id} id={id} />)}
          <DockRule /><DockIcon id="shot" /><DockIcon id="trash" />
        </Dock>
      </Desktop>
    </>
  );
}
